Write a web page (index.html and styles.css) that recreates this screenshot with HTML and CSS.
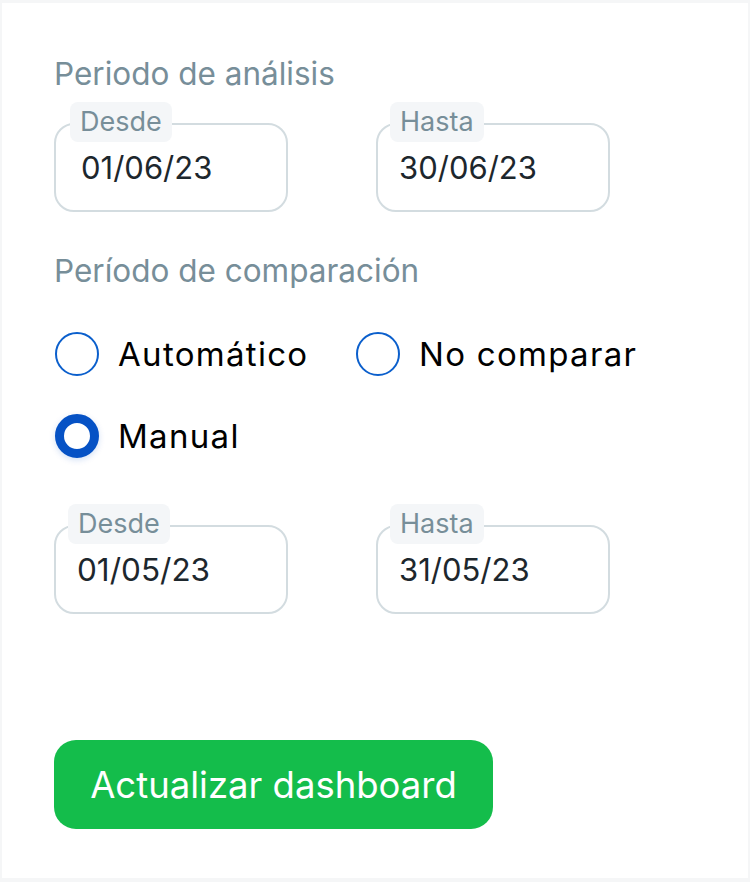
FILE: index.html
```html
<!DOCTYPE html>
<html lang="es">
<head>
<meta charset="utf-8">
<title>Periodo</title>
<link rel="stylesheet" href="styles.css">
</head>
<body>
<main class="card">
  <h2 class="section-title">Periodo de análisis</h2>
  <div class="field-row">
    <div class="field">
      <span class="chip">Desde</span>
      <div class="box"><span class="value">01/06/23</span></div>
    </div>
    <div class="field field-right">
      <span class="chip">Hasta</span>
      <div class="box"><span class="value">30/06/23</span></div>
    </div>
  </div>

  <h2 class="section-title title-2">Período de comparación</h2>
  <div class="radios">
    <label class="radio"><span class="dot"></span><span class="radio-label">Automático</span></label>
    <label class="radio"><span class="dot"></span><span class="radio-label">No comparar</span></label>
    <label class="radio"><span class="dot dot-on"></span><span class="radio-label">Manual</span></label>
  </div>

  <div class="field-row row-2">
    <div class="field field-tight">
      <span class="chip">Desde</span>
      <div class="box"><span class="value">01/05/23</span></div>
    </div>
    <div class="field field-right">
      <span class="chip">Hasta</span>
      <div class="box"><span class="value">31/05/23</span></div>
    </div>
  </div>

  <button class="btn" type="button">Actualizar dashboard</button>
</main>
</body>
</html>
```
FILE: styles.css
```css
* { box-sizing: border-box; }
html, body { margin: 0; padding: 0; }
body {
  background: #f5f6f7;
  width: 750px;
  height: 882px;
  padding: 3px 2px 4px 2px;
  font-family: Inter, "Noto Sans", sans-serif;
}
.card {
  background: #ffffff;
  height: 875px;
  padding: 52px 0 0 52px;
  display: flex;
  flex-direction: column;
  align-items: flex-start;
}
.section-title {
  margin: 0;
  font-size: 31.5px;
  line-height: 38px;
  font-weight: 400;
  color: #778e99;
}
.title-2 { margin-top: 40px; }
.field-row {
  display: flex;
  gap: 88px;
  margin-top: 9px;
}
.row-2 { margin-top: 46px; }
.field {
  position: relative;
  padding-top: 21px;
  width: 234px;
}
.chip {
  position: absolute;
  top: 0;
  left: 16px;
  height: 40px;
  padding: 0 10px;
  background: #f4f6f8;
  border-radius: 8px;
  font-size: 27px;
  line-height: 40px;
  color: #778e99;
}
.field-right .chip { left: 14px; }
.field-tight .chip { left: 14px; }
.box {
  height: 89px;
  border: 2px solid #d3dce0;
  border-radius: 20px;
  padding: 24px 0 0 25px;
}
.field-tight .box { padding-left: 21px; }
.field-right .box { padding-left: 21px; }
.value {
  display: block;
  font-size: 31px;
  line-height: 38px;
  color: #1d272d;
}
.field-tight .value { font-size: 31.5px; }
.radios {
  display: grid;
  grid-template-columns: 301px auto;
  row-gap: 38px;
  margin-top: 42px;
  margin-left: 1px;
}
.radio {
  display: flex;
  align-items: center;
  gap: 19px;
}
.dot {
  width: 44px;
  height: 44px;
  border-radius: 50%;
  border: 2px solid #0b5fcc;
  background: #fff;
  flex: none;
}
.dot-on {
  border: 9px solid #0652c5;
  box-shadow: 0 2px 6px rgba(6, 82, 197, 0.18);
}
.radio-label {
  font-size: 33px;
  line-height: 40px;
  letter-spacing: 1.3px;
  color: #000;
}
.btn {
  margin-top: 126px;
  width: 439px;
  height: 89px;
  border: none;
  border-radius: 22px;
  background: #14bd4b;
  color: #ffffff;
  font-family: Inter, "Noto Sans", sans-serif;
  font-size: 36.5px;
  padding: 0;
  text-align: center;
}
```
